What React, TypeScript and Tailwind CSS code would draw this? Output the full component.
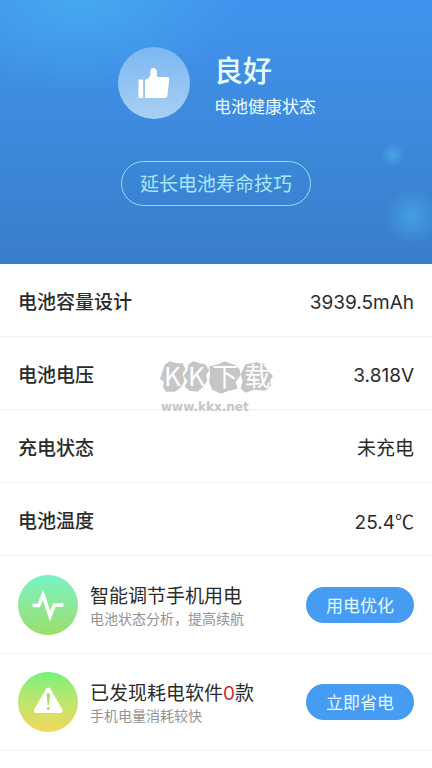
import type { ReactNode } from "react";

const stats = [
  { label: "电池容量设计", value: "3939.5mAh" },
  { label: "电池电压", value: "3.818V" },
  { label: "充电状态", value: "未充电" },
  { label: "电池温度", value: "25.4", unit: "℃" },
];

function ThumbIcon() {
  return (
    <svg viewBox="0 0 32 32" className="h-8 w-8" fill="#fff" aria-hidden="true">
      <rect x="0.5" y="12.500" width="4.600" height="18.500" rx="1.200" />
      <path d="M7 31V13c3.600-1 5.200-3 5.400-6V4.300C12.400 2.200 13.800 1 15.500 1s3.500 1.500 3.500 4v5h10.500c1.300 0 2 .9 1.800 2.200L29.400 28.500c-.3 1.600-1.300 2.500-2.900 2.500z" />
    </svg>
  );
}

function PulseIcon() {
  return (
    <svg viewBox="0 0 60 60" className="h-15 w-15" aria-hidden="true">
      <path
        d="M14.500 30.500H20.800L25 20L32 41L36.300 30H45.500"
        fill="none"
        stroke="#fff"
        strokeWidth="3.600"
        strokeMiterlimit="6"
      />
    </svg>
  );
}

function WarningIcon() {
  return (
    <svg viewBox="0 0 60 60" className="h-15 w-15" aria-hidden="true">
      <path
        d="M30.300 18L42 38.500H18.500z"
        fill="#fff"
        stroke="#fff"
        strokeWidth="5"
        strokeLinejoin="round"
      />
      <path d="M28.600 22.800a1.700 1.700 0 0 1 3.400 0L30.900 33h-1.200z" fill="#9be172" />
      <circle cx="30.300" cy="36.500" r="1.600" fill="#a5df6c" />
    </svg>
  );
}

function Watermark() {
  return (
    <div className="pointer-events-none absolute top-[97px] left-1/2 w-[116px] -translate-x-1/2 text-[#c6c6c6]">
      <div className="relative ml-[2px]">
        <svg viewBox="0 0 116 34" className="block h-[34px] w-full" fill="currentColor" aria-hidden="true">
          <path d="M5 3L10 0L17 2L23 2L26 8L23 13L25 20L21 27L15 31L6 31L3 26L4 21L0 18L2 12z" />
          <path d="M29 3L34 0L41 2L46 3L50 9L47 14L48 20L44 26L38 31L30 30L25 26L28 20L24 15L28 9z" />
          <path d="M50 5L59 3L66 0L77 4L81 8L82 14L77 21L79 28L70 30L62 33L53 29L50 21L51 13z" />
          <path d="M87 3L98 1L107 3L110 10L115 15L112 19L113 25L107 30L96 29L87 32L82 28L84 20L82 13z" />
        </svg>
        <div className="absolute inset-x-0 -top-[2px] grid h-8 grid-cols-[25px_23px_34px_31px] items-center text-center font-['Noto_Sans_CJK_SC'] text-[26px] leading-8 text-white">
          <span>K</span>
          <span>K</span>
          <span>下</span>
          <span>载</span>
        </div>
      </div>
      <p className="mt-1 ml-[3px] font-['DejaVu_Sans'] text-[12px] leading-4 font-bold">www.kkx.net</p>
    </div>
  );
}

type ActionRowProps = {
  icon: ReactNode;
  iconClass: string;
  title: ReactNode;
  description: string;
  action: string;
};

function ActionRow({ icon, iconClass, title, description, action }: ActionRowProps) {
  return (
    <section className="flex h-[97px] items-center border-b border-[#f0f0f0] px-[18px]">
      <div className={`h-15 w-15 shrink-0 overflow-hidden rounded-full ${iconClass}`}>{icon}</div>
      <div className="ml-3 min-w-0 flex-1 pt-1">
        <h2 className="text-[19px] leading-6">{title}</h2>
        <p className="text-[14px] leading-5 text-[#929292]">{description}</p>
      </div>
      <button type="button" className="h-9 w-[108px] shrink-0 rounded-full bg-[#469bf3] pt-1 text-[17px] text-[#e2fcff]">
        {action}
      </button>
    </section>
  );
}

export default function App() {
  return (
    <main className="min-h-screen bg-white font-[Inter,'Noto_Sans_CJK_SC',sans-serif] text-[#2b2b2b]">
      <header className="relative flex flex-col items-center overflow-hidden bg-linear-to-b from-[#4194ee] to-[#397ecb] pt-[47px] pb-[58px]">
        <div className="absolute -top-24 -left-20 h-48 w-80 bg-radial from-[#48b0f2]/70 to-transparent to-70%" />
        <div className="absolute top-[143px] right-[27px] h-6 w-6 bg-radial from-[#48a5e4] to-transparent to-70%" />
        <div className="absolute top-[188px] -right-2 h-14 w-14 bg-radial from-[#469fe0] to-transparent to-70%" />

        <div className="relative flex w-[196px] gap-6">
          <div className="flex h-18 w-18 shrink-0 items-center justify-center rounded-full bg-linear-to-b from-[#7bb7f2] to-[#a9cff3]">
            <ThumbIcon />
          </div>
          <div className="shrink-0 pt-[6px] text-[#e8ffff]">
            <h1 className="text-[29px] leading-[38px] font-medium">良好</h1>
            <p className="mt-1 text-[17px] leading-6">电池健康状态</p>
          </div>
        </div>

        <button
          type="button"
          className="relative mt-[42px] h-[45px] w-[190px] rounded-full border border-[#92dcf5] pt-1 text-[19px] text-[#a7e9fa]"
        >
          延长电池寿命技巧
        </button>
      </header>

      <div className="relative pb-px">
        <dl>
          {stats.map((item) => (
            <div
              key={item.label}
              className="flex h-[73px] items-center justify-between border-b border-[#f0f0f0] px-[18px] pt-[6px] text-[19px]"
            >
              <dt className="font-medium">{item.label}</dt>
              <dd>
                {item.value}
                {item.unit ? <span className="font-['Noto_Sans_CJK_SC']">{item.unit}</span> : null}
              </dd>
            </div>
          ))}
        </dl>
        <Watermark />
      </div>

      <ActionRow
        icon={<PulseIcon />}
        iconClass="bg-linear-to-b from-[#78f3c2] to-[#9bde69]"
        title="智能调节手机用电"
        description="电池状态分析，提高续航"
        action="用电优化"
      />
      <ActionRow
        icon={<WarningIcon />}
        iconClass="bg-linear-to-b from-[#73f17b] to-[#f3d75b]"
        title={
          <>
            已发现耗电软件<span className="text-[#d12b27]">0</span>款
          </>
        }
        description="手机电量消耗较快"
        action="立即省电"
      />
    </main>
  );
}
